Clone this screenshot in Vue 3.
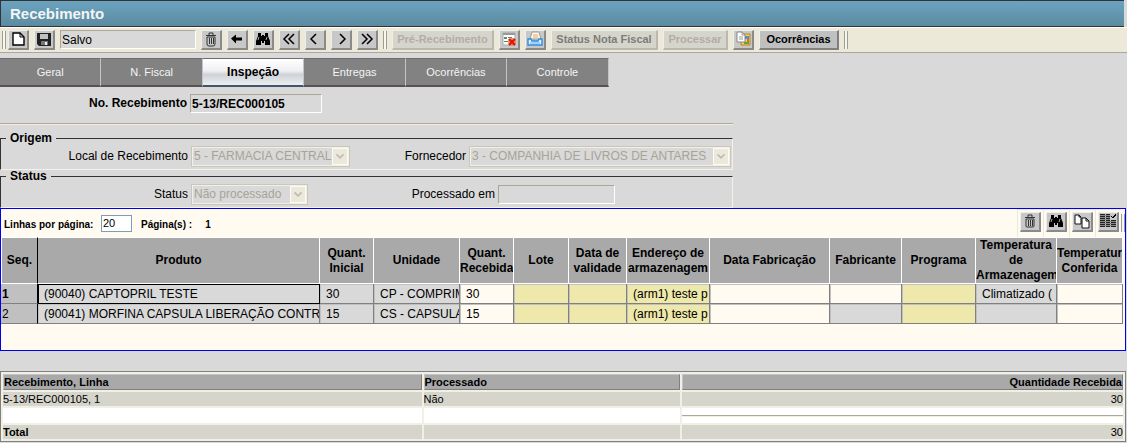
<script setup>
import { ref } from 'vue'

const tabs = ['Geral', 'N. Fiscal', 'Inspeção', 'Entregas', 'Ocorrências', 'Controle']
const activeTab = ref('Inspeção')
const message = ref('Salvo')
const receiptNumber = ref('5-13/REC000105')
const processedAt = ref('')
const linesPerPage = ref('20')

const columns = [
  { title: 'Seq.', width: 37 },
  { title: 'Produto', width: 282 },
  { title: 'Quant. Inicial', width: 54 },
  { title: 'Unidade', width: 86 },
  { title: 'Quant. Recebida', width: 54 },
  { title: 'Lote', width: 55 },
  { title: 'Data de validade', width: 58 },
  { title: 'Endereço de armazenagem', width: 83 },
  { title: 'Data Fabricação', width: 120 },
  { title: 'Fabricante', width: 72 },
  { title: 'Programa', width: 74 },
  { title: 'Temperatura de Armazenagem', width: 81 },
  { title: 'Temperatura Conferida', width: 66 },
]

const rows = [
  [
    ['1', 'seq current'], ['(90040) CAPTOPRIL TESTE', 'locked focused'], ['30', 'locked'],
    ['CP - COMPRIM', 'locked'], ['30', 'open'], ['', 'lookup'], ['', 'lookup'],
    ['(arm1) teste p', 'lookup'], ['', 'open'], ['', 'open'], ['', 'lookup'],
    ['Climatizado (', 'locked'], ['', 'open'],
  ],
  [
    ['2', 'seq'], ['(90041) MORFINA CAPSULA LIBERAÇÃO CONTRO', 'locked'], ['15', 'locked'],
    ['CS - CAPSULA', 'locked'], ['15', 'open'], ['', 'lookup'], ['', 'lookup'],
    ['(arm1) teste p', 'lookup'], ['', 'open'], ['', 'locked'], ['', 'lookup'],
    ['', 'locked'], ['', 'open'],
  ],
]
</script>

<template>
  <main class="page">
    <h1 class="title">Recebimento</h1>

    <div class="toolbar">
      <span class="grip"></span>
      <button class="tool" aria-label="Novo">
        <svg viewBox="0 0 16 16"><path d="M3 2h7l4 4v8H3z" fill="#fff" stroke="#000" stroke-width="1.4" /><path d="M10 2v4h4" fill="none" stroke="#000" /></svg>
      </button>
      <button class="tool" aria-label="Salvar">
        <svg viewBox="0 0 16 16"><path d="M1 2h14v13H3l-2-2z" fill="#222" /><path d="M4 3h8v5H4z" fill="#c0c0c0" /><path d="M5 10h7v4H5z" fill="#777" /><path d="M9 11h2v3H9z" fill="#eee" /></svg>
      </button>
      <input v-model="message" class="sunken message" aria-label="Mensagem" readonly />
      <button class="tool" aria-label="Excluir">
        <svg viewBox="0 0 16 16"><path d="M3 4.500h10M6 4V2h4v2M4 6v7q0 2 2 2h4q2 0 2-2V6zM6.500 7v6M8.500 7v6M10.500 7v6" fill="none" stroke="#333" /></svg>
      </button>
      <button class="tool" aria-label="Voltar">
        <svg viewBox="0 0 16 16"><path d="M2 7.500l5-4v3h6v3H7v3z" fill="#000" /></svg>
      </button>
      <button class="tool" aria-label="Procurar">
        <svg viewBox="0 0 16 16"><path d="M3 2h3v3h1V4h2v1h1V2h3v3l2 5v4h-5v-4H9v2H7v-2H6v4H1v-4l2-5z" fill="#000" /><path d="M3 9l1-3M11 9l1-3" stroke="#aaa" /></svg>
      </button>
      <button class="tool" aria-label="Primeiro">
        <svg viewBox="0 0 16 16"><path d="M8 3L3 8l5 5M13 3L8 8l5 5" fill="none" stroke="#000" stroke-width="1.500" /></svg>
      </button>
      <button class="tool" aria-label="Anterior">
        <svg viewBox="0 0 16 16"><path d="M9 3L4 8l5 5" fill="none" stroke="#000" stroke-width="1.500" /></svg>
      </button>
      <button class="tool" aria-label="Próximo">
        <svg viewBox="0 0 16 16"><path d="M7 3l5 5-5 5" fill="none" stroke="#000" stroke-width="1.500" /></svg>
      </button>
      <button class="tool" aria-label="Último">
        <svg viewBox="0 0 16 16"><path d="M3 3l5 5-5 5M8 3l5 5-5 5" fill="none" stroke="#000" stroke-width="1.500" /></svg>
      </button>
      <span class="grip"></span>
      <button class="action pre" disabled>Pré-Recebimento</button>
      <button class="tool" aria-label="Cancelar item">
        <svg viewBox="0 0 16 16"><path d="M2 2h12v12H2z" fill="#fff" stroke="#aaa" /><path d="M2 3h12" stroke="#999" stroke-width="2" /><path d="M3 6h3v2H3z" fill="#4a9a4a" /><path d="M3 10h4v1H3zM7 6h4v1H7z" fill="#777" /><circle cx="11" cy="11" r="4" fill="#ef8a50" /><path d="M8 8l6 6M14 8l-6 6" stroke="#d01818" stroke-width="2" /></svg>
      </button>
      <button class="tool" aria-label="Imprimir">
        <svg viewBox="0 0 16 16"><path d="M5 1h7l2 7H3z" fill="#fff8e8" stroke="#999" /><path d="M6 4h5M6 6h5" stroke="#d8a868" /><path d="M1 8h3l1 2h6l1-2h3v6H1z" fill="#dcefff" stroke="#2c8ee0" stroke-width="1.400" /><path d="M3 12h10" stroke="#66b2ee" /></svg>
      </button>
      <button class="action status" disabled>Status Nota Fiscal</button>
      <button class="action process" disabled>Processar</button>
      <button class="tool" aria-label="Documentos">
        <svg viewBox="0 0 16 16"><path d="M6 3h9v11H6z" fill="#f4d448" stroke="#c08020" /><path d="M10 5h4v3h-4z" fill="#4a92d8" /><path d="M9 11h5v2H9z" fill="#58a848" /><path d="M12 8h2v3h-2z" fill="#e07028" /><path d="M2 1h5l3 3v7H2z" fill="#fff" stroke="#888" /><path d="M7 1v3h3M4 6h4M4 8h4" fill="none" stroke="#999" /></svg>
      </button>
      <button class="action events">Ocorrências</button>
      <span class="grip"></span>
    </div>

    <nav class="tabs" aria-label="Seções">
      <button
        v-for="tab in tabs"
        :key="tab"
        :class="['tab', { active: tab === activeTab }]"
        @click="activeTab = tab"
      >{{ tab }}</button>
    </nav>

    <form class="form" @submit.prevent>
      <div class="line first">
        <label class="main-label" for="number">No. Recebimento</label>
        <input id="number" v-model="receiptNumber" class="sunken number" readonly />
      </div>
      <hr class="rule" />
      <fieldset>
        <legend>Origem</legend>
        <div class="line">
          <label class="main-label" for="place">Local de Recebimento</label>
          <span class="combo place">
            <select id="place" disabled><option>5 - FARMACIA CENTRAL</option></select>
            <svg class="chevron" viewBox="0 0 16 17"><path d="M4 6l4 4 4-4" /></svg>
          </span>
          <label class="supplier-label" for="supplier">Fornecedor</label>
          <span class="combo supplier">
            <select id="supplier" disabled><option>3 - COMPANHIA DE LIVROS DE ANTARES</option></select>
            <svg class="chevron" viewBox="0 0 16 17"><path d="M4 6l4 4 4-4" /></svg>
          </span>
        </div>
      </fieldset>
      <fieldset>
        <legend>Status</legend>
        <div class="line">
          <label class="main-label" for="status">Status</label>
          <span class="combo state">
            <select id="status" disabled><option>Não processado</option></select>
            <svg class="chevron" viewBox="0 0 16 17"><path d="M4 6l4 4 4-4" /></svg>
          </span>
          <label class="processed-label" for="processed">Processado em</label>
          <input id="processed" v-model="processedAt" class="sunken processed" readonly />
        </div>
      </fieldset>
    </form>

    <section class="grid-panel">
      <div class="grid-bar">
        <label for="per-page">Linhas por página:</label>
        <input id="per-page" v-model="linesPerPage" class="per-page" />
        <span class="pages">Página(s) :</span>
        <span class="page-count">1</span>
        <div class="grid-tools">
          <span class="slot"><button class="tool" aria-label="Excluir linha">
            <svg viewBox="0 0 16 16"><path d="M3 4.500h10M6 4V2h4v2M4 6v7q0 1 1 1h6q1 0 1-1V6zM6.500 7v6M8.500 7v6M10.500 7v6" fill="none" stroke="#333" /></svg>
          </button></span>
          <span class="slot"><button class="tool" aria-label="Procurar linha">
            <svg viewBox="0 0 16 16"><path d="M3 2h3v3h1V4h2v1h1V2h3v3l2 5v4h-5v-4H9v2H7v-2H6v4H1v-4l2-5z" fill="#000" /><path d="M3 9l1-3M11 9l1-3" stroke="#aaa" /></svg>
          </button></span>
          <span class="slot"><button class="tool" aria-label="Copiar linha">
            <svg viewBox="0 0 16 16"><path d="M1 2h4l2 2v7H1zM8 5h4l3 3v7H8z" fill="#fff" stroke="#111" /><path d="M5 2v2h2M12 5v3h3" fill="none" stroke="#111" /></svg>
          </button></span>
          <span class="slot"><button class="tool" aria-label="Configurar colunas">
            <svg viewBox="0 0 16 16" shape-rendering="crispEdges"><path d="M0 1.500h5M0 3.500h5M0 5.500h5M0 7.500h5M0 9.500h5M0 11.500h5M0 13.500h5M6 1.500h4M6 3.500h4M6 5.500h4M6 7.500h4M6 9.500h4M6 11.500h4M6 13.500h4M11 7.500h5M11 9.500h5M11 11.500h5M11 13.500h5" stroke="#222" /><path d="M0 2.500h10M0 4.500h10M0 6.500h10M0 8.500h16M0 10.500h16M0 12.500h16" stroke="#888" /><path d="M11 3l2 2 3-4" fill="none" stroke="#000" stroke-width="1.300" /></svg>
          </button></span>
          <span class="grip"></span>
        </div>
      </div>
      <table class="items">
        <colgroup>
          <col v-for="col in columns" :key="col.title" :style="{ width: col.width + 'px' }" />
        </colgroup>
        <thead>
          <tr>
            <th v-for="col in columns" :key="col.title" scope="col">{{ col.title }}</th>
          </tr>
        </thead>
        <tbody>
          <tr v-for="(row, r) in rows" :key="r">
            <td v-for="(cell, c) in row" :key="c" :class="cell[1]">{{ cell[0] }}</td>
          </tr>
        </tbody>
      </table>
    </section>

    <table class="summary">
      <colgroup><col class="c1" /><col class="c2" /><col class="c3" /></colgroup>
      <thead>
        <tr><th scope="col">Recebimento, Linha</th><th scope="col">Processado</th><th scope="col" class="amount">Quantidade Recebida</th></tr>
      </thead>
      <tbody>
        <tr><td>5-13/REC000105, 1</td><td>Não</td><td class="amount">30</td></tr>
        <tr class="spacer"><td></td><td></td><td><hr class="rule" /></td></tr>
        <tr><td class="total">Total</td><td></td><td class="amount">30</td></tr>
      </tbody>
    </table>
  </main>
</template>

<style>
body { background: #d9d9d9; }
</style>

<style scoped>
.page {
  font-family: "Liberation Sans", Arial, sans-serif;
  font-size: 12px;
  line-height: 15px;
  color: #000;
}
.page * { box-sizing: border-box; }
button, input, select { font: inherit; color: inherit; margin: 0; border-radius: 0; }
.title {
  margin: 0 3px 0 0;
  height: 27px;
  padding-left: 9px;
  border: 1px solid #333;
  border-right: 0;
  background: linear-gradient(#6ba4c0, #5c8ba0);
  color: #f4f4f4;
  font-size: 15px;
  line-height: 26px;
}
.toolbar {
  display: flex;
  align-items: center;
  gap: 5px;
  height: 26px;
  padding: 0 2px 1px;
  background: #ece9d8;
  border-top: 1px solid #fff;
  border-bottom: 1px solid #aca899;
}
.grip {
  flex: none;
  width: 4px;
  height: 18px;
  border: solid #9c9c94;
  border-width: 0 1px;
  background: #f8f7f0;
}
.toolbar .grip:first-child { margin-right: -3px; }
.tool {
  display: flex;
  align-items: center;
  justify-content: center;
  flex: none;
  width: 21px;
  height: 20px;
  padding: 0;
  background: #c8c8c8;
  border: solid;
  border-width: 1px 2px 2px 1px;
  border-color: #eee #8a8a8a #8a8a8a #eee;
}
.tool svg { width: 16px; height: 16px; }
.sunken {
  padding: 0 1px;
  background: #d9d9d9;
  border: 1px solid;
  border-color: #aca899 #fff #fff #aca899;
  outline: 0;
}
.message { width: 136px; height: 19px; }
.action {
  height: 20px;
  padding: 0;
  background: #d6d5cc;
  border: solid;
  border-width: 1px 2px 2px 1px;
  border-color: #eee #bcb8b0 #bcb8b0 #eee;
  color: #b4aca8;
  font-size: 11px;
  font-weight: bold;
  white-space: nowrap;
}
.pre { width: 102px; }
.status { width: 107px; color: #7c7c78; }
.process { width: 65px; }
.events { width: 80px; background: #c0c0c0; color: #000; border-color: #eee #808080 #808080 #eee; }

.tabs { display: flex; width: 54%; margin-top: 5px; }
.tab {
  flex: 1;
  height: 29px;
  padding: 0;
  border: solid;
  border-width: 1px 1px 2px 0;
  border-color: #6e6e6e #c4c4c4 #5a5254 #6e6e6e;
  background: #828282;
  color: #f4f4f4;
  font-size: 11px;
}
.tab.active {
  background: linear-gradient(#fff, #f0f0f0 45%, #cfd2d8 60%, #eceef0);
  border-bottom-color: #44546a;
  color: #000;
  font-size: 12px;
  font-weight: bold;
}

.form { width: 65%; }
.line { display: flex; align-items: center; gap: 3px; }
.first { padding: 7px 0 10px; font-weight: bold; }
.main-label { width: 187px; text-align: right; }
.number { width: 132px; height: 19px; }
.rule {
  height: 2px;
  margin: 0;
  border: solid;
  border-width: 1px 0;
  border-color: #aca899 transparent #f4f0dc;
}
.first + .rule { margin-bottom: 7px; }
fieldset {
  min-width: 0;
  margin: 0;
  padding: 1px 0 2px;
  border: 1px solid;
  border-color: #333 #f4f2e8 #f4f2e8 #333;
}
legend {
  height: 13px;
  margin-left: 5px;
  padding: 0 4px;
  font-weight: bold;
  line-height: 13px;
}
fieldset .line { height: 21px; }
.combo { position: relative; display: block; height: 21px; }
.combo select {
  display: block;
  width: 100%;
  height: 21px;
  padding: 0 17px 0 2px;
  appearance: none;
  background: #d9d9d9;
  border: 1px solid #c9c7ba;
  box-shadow: inset 0 0 0 1px #f2f0e4;
  color: #a6a496;
  opacity: 1;
}
.chevron {
  position: absolute;
  top: 2px;
  right: 2px;
  width: 16px;
  height: 17px;
  background: #ece9dc;
  border: 1px solid #fbfaf4;
}
.chevron path { fill: none; stroke: #bdbcb2; stroke-width: 2; }
.place { width: 159px; }
.supplier-label { width: 113px; text-align: right; }
.supplier { width: 262px; }
.state { width: 117px; }
.processed-label { width: 184px; text-align: right; }
.processed { width: 117px; height: 19px; }

.grid-panel {
  margin-right: 1px;
  padding-bottom: 26px;
  border: 1px solid #0000f0;
  background: #fffbf0;
  overflow: hidden;
}
.grid-bar {
  display: flex;
  align-items: center;
  height: 28px;
  padding-left: 3px;
  font-size: 10px;
  font-weight: bold;
}
.grid-bar label { width: 91px; padding-top: 3px; white-space: nowrap; }
.per-page {
  width: 31px;
  height: 17px;
  margin-left: 6px;
  padding: 0 1px;
  background: #fff;
  border: 1px solid #7f9db9;
  font-size: 11px;
  font-weight: normal;
}
.pages { margin-left: 9px; padding-top: 3px; }
.page-count { margin-left: 13px; padding-top: 3px; }
.grid-tools { display: flex; align-items: center; height: 28px; margin-left: auto; }
.slot {
  display: flex;
  align-items: center;
  justify-content: center;
  width: 26px;
  height: 28px;
  padding-bottom: 4px;
  border: solid #ece9d8;
  border-width: 1px 0 0 1px;
}

.items {
  width: calc(100% - 2px);
  table-layout: fixed;
  border-collapse: separate;
  border-spacing: 0;
}
.items th {
  height: 47px;
  padding: 0;
  background: #a9a9a9;
  border: solid #fff;
  border-width: 1px 1px 1px 0;
  overflow: hidden;
}
.items th:first-child { border-left-width: 1px; border-right-color: #000; }
.items td {
  height: 20px;
  padding: 1px 0 0 6px;
  border: solid #808080;
  border-width: 0 1px 1px 0;
  box-shadow: inset 1px 1px #c0c0c0;
  overflow: hidden;
  white-space: nowrap;
}
.items .seq { padding-left: 1px; background: #c0c0c0; border-right-color: #000; }
.items .current { font-weight: bold; }
.items .locked { background: #d9d9d9; }
.items .lookup { background: #eee8aa; }
.items .open { background: #fffbf0; }
.items .focused { box-shadow: inset 1px 1px #000; border-color: #000; }

.summary {
  width: calc(100% - 1px);
  margin-top: 20px;
  table-layout: fixed;
  border: 1px solid #808080;
  border-collapse: separate;
  border-spacing: 2px;
  background: #f1f0e6;
  font-size: 11px;
  line-height: 14px;
}
.c1 { width: 37.500%; }
.c2 { width: 23%; }
.summary th {
  height: 16px;
  padding: 0;
  border: 1px solid;
  border-color: #c4c4c4 #808080 #808080 #c4c4c4;
  background: #a9a9a9;
  text-align: left;
}
.summary td { height: 14px; padding: 0; background: #d6d5cc; }
.summary .spacer td { height: 15px; background: #fff; }
.summary .amount { text-align: right; }
.summary .total { font-weight: bold; }
</style>
